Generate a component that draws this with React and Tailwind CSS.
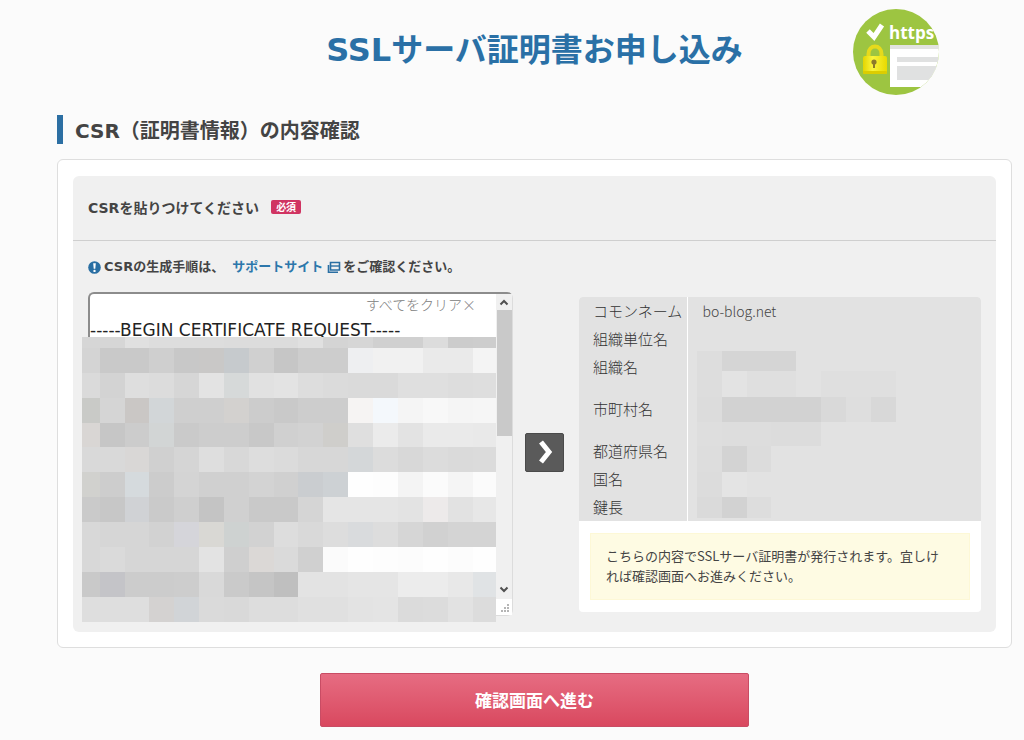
import React from "react";

const WIDE = "font-['DejaVu_Sans','Noto_Sans_CJK_JP',sans-serif]";

// Grey levels of the masked areas, one two-digit hex value per cell.
const REQUEST_MASK = [
  "d6 d6 e0 dd dd dd dc dc dc e0 d4 d6 d0 d0 dc cc cd",
  "d4 c9 c9 cf c8 c8 c9 d0 c6 cd cd f0 f1 f1 ea ea f4",
  "da d3 de dc d6 e3 d7 e1 e3 dd db da da df df dd de",
  "c9 d5 c8 d3 cf cf d1 cc c9 cd cd f5 f8 f5 f8 f5 f6",
  "d8 c6 cc d3 ca cd cd c8 d0 d2 cf df eb e3 ea ea e9",
  "d9 d9 d8 d0 d5 de d8 dd db d7 d7 d6 dc d8 dc da db",
  "d0 cd d9 cc d4 d0 d0 d3 d0 cb cd fe fd f4 fb f5 fb",
  "ca c7 d2 ca cf c4 d0 c9 c9 d5 e5 e5 e5 e3 eb e2 e7",
  "d8 d6 d6 d2 d5 d8 cf d2 dd d9 dd da dd d6 d1 d4 d4",
  "d8 da d6 d6 d6 e3 cf d9 da d0 fb fe fd fc fe fc fe",
  "c9 c4 cc cc cd d9 ca c5 bf e3 e3 e5 e5 ec ec e8 e2",
  "de de de d2 d2 da d9 dd dd e0 e0 e3 e4 db dc e2 dc",
];
const REQUEST_X = [0, 18, 43, 67, 92, 117, 142, 167, 192, 216, 241, 266, 291, 316, 341, 366, 391, 414];
const REQUEST_Y = [0, 11, 36, 61, 86, 110, 135, 160, 185, 210, 235, 260, 285];

// Cells whose text colour bled into the mask, keyed by "row-column".
const REQUEST_TINTS = {
  "1-5": "#c9c8c7",
  "1-6": "#c6cacd",
  "1-11": "#eeeff1",
  "2-6": "#d6d9d9",
  "3-0": "#c9cac7",
  "3-2": "#cac7c5",
  "3-3": "#d2d6d8",
  "3-6": "#d3d1cf",
  "3-11": "#f6f4f3",
  "3-12": "#f4f8fc",
  "4-0": "#d9d6d4",
  "4-3": "#d2d5d5",
  "4-10": "#cfcecb",
  "5-2": "#d9d7d6",
  "5-11": "#d4d7d9",
  "6-0": "#d1d1ce",
  "6-2": "#d5dadd",
  "6-9": "#cacdd0",
  "6-10": "#cdd1d4",
  "7-2": "#d0d2d5",
  "7-14": "#edeaea",
  "8-4": "#d5d5da",
  "8-5": "#d9d8d4",
  "8-6": "#ced2d1",
  "8-11": "#d9dbdd",
  "9-7": "#dbd8d6",
  "10-1": "#c4c4c8",
  "10-16": "#e0e3e5",
  "11-3": "#d4d2d1",
  "11-4": "#d1d4d7",
};

const DETAIL_MASK = [
  "dd d5 d5 d5",
  "dd e3 df df e2 df df df",
  "dc d2 d2 d2 d2 d9 de d8",
  "de dd dd dc dc",
  "dd d3 dc",
  "dc e4",
  "da d2 dd",
];
const DETAIL_X = [0, 25, 50, 74, 99, 124, 149, 174, 199];
const DETAIL_Y = [0, 20, 46, 71, 95, 121, 146, 167];

function Mask({ rows, xs, ys, tints = {}, className }) {
  const width = xs[xs.length - 1];
  const height = ys[ys.length - 1];
  return (
    <svg
      aria-hidden="true"
      width={width}
      height={height}
      viewBox={`0 0 ${width} ${height}`}
      shapeRendering="crispEdges"
      className={className}
    >
      {rows.map((row, r) =>
        row.split(" ").map((level, c) => (
          <rect
            key={`${r}-${c}`}
            x={xs[c]}
            y={ys[r]}
            width={xs[c + 1] - xs[c]}
            height={ys[r + 1] - ys[r]}
            fill={tints[`${r}-${c}`] || `#${level}${level}${level}`}
          />
        ))
      )}
    </svg>
  );
}

function HttpsLogo() {
  return (
    <svg width="88" height="88" viewBox="0 0 88 88" role="img" aria-label="https">
      <defs>
        <clipPath id="disc">
          <circle cx="44" cy="44" r="43" />
        </clipPath>
        <linearGradient id="lock" x1="0" y1="0" x2="1" y2="0">
          <stop offset="0" stopColor="#e3d500" />
          <stop offset="0.4" stopColor="#faf53c" />
          <stop offset="1" stopColor="#e8da00" />
        </linearGradient>
      </defs>
      <g clipPath="url(#disc)">
        <rect width="88" height="88" fill="#9dc541" />
        <path d="M38 37H88V79H38Z" fill="#fff" />
        <path d="M38 37H88V41H38Z" fill="#e2e3df" />
        <path d="M45 49H86V54H45ZM45 58H88V72H45Z" fill="#e0e1e1" />
        <path d="M16 23L22 29L30 17" fill="none" stroke="#fff" strokeWidth="5" />
        <path
          d="M16.5 50V46C16.5 36 29.5 36 29.5 46V50"
          fill="none"
          stroke="#e6da1c"
          strokeWidth="4"
        />
        <rect x="11" y="48" width="24" height="18" rx="2" fill="url(#lock)" />
        <rect x="11" y="63" width="24" height="3" rx="1" fill="#dccd00" />
        <circle cx="22" cy="54" r="2.6" fill="#8d7b2a" />
        <path d="M21 55H23V60H21Z" fill="#8d7b2a" />
        <text
          x="37"
          y="31"
          fill="#fff"
          fontFamily="'Open Sans', 'Noto Sans', sans-serif"
          fontWeight="700"
          fontSize="17"
        >
          https
        </text>
      </g>
    </svg>
  );
}

function AlertIcon() {
  return (
    <svg width="13" height="13" viewBox="0 0 13 13" aria-hidden="true">
      <circle cx="6.5" cy="6.5" r="6.3" fill="#2a6fa3" />
      <path d="M5.2 2.2H7.8L7.3 7.8H5.7Z" fill="#fff" />
      <circle cx="6.5" cy="9.9" r="1.2" fill="#fff" />
    </svg>
  );
}

function WindowIcon() {
  return (
    <svg width="14" height="13" viewBox="0 0 14 13" aria-hidden="true" fill="none" stroke="#2a6fa3">
      <path d="M3.5 1.5H12.5V9H3.5Z" strokeWidth="1.6" />
      <path d="M3.5 5H12.5" strokeWidth="1.4" />
      <path d="M1.5 4V11.2H11" strokeWidth="1.6" />
    </svg>
  );
}

function ScrollTrack() {
  return (
    <div aria-hidden="true" className="flex w-4 flex-col items-center bg-[#f0f0f0]">
      <svg width="16" height="16" viewBox="0 0 16 16" fill="none" stroke="#505050" strokeWidth="2">
        <path d="M4.5 10.5L8 7L11.5 10.5" />
      </svg>
      <div className="h-[126px] w-[15px] bg-[#c9c9c9]" />
      <div className="flex-1" />
      <svg width="16" height="17" viewBox="0 0 16 17" fill="none" stroke="#505050" strokeWidth="2">
        <path d="M4.5 5.5L8 9L11.5 5.5" />
      </svg>
      <svg width="16" height="16" viewBox="0 0 16 16" className="bg-white" fill="#b5b5b5">
        <path d="M11 5h2v2h-2zM8 8h2v2h-2zM11 8h2v2h-2zM5 11h2v2h-2zM8 11h2v2h-2zM11 11h2v2h-2z" />
      </svg>
    </div>
  );
}

const DETAILS = [
  { name: "コモンネーム", value: "bo-blog.net", height: "h-7" },
  { name: "組織単位名", value: "", height: "h-7" },
  { name: "組織名", value: "", height: "h-7" },
  { name: "市町村名", value: "", height: "h-14" },
  { name: "都道府県名", value: "", height: "h-7" },
  { name: "国名", value: "", height: "h-7" },
  { name: "鍵長", value: "", height: "h-7" },
];

export default function App() {
  return (
    <main className="min-h-screen bg-[#fbfbfb] pt-2 pr-3 pb-3 pl-[57px] font-['Noto_Sans_CJK_JP',sans-serif] text-[#444]">
      <header className="grid grid-cols-[1fr_auto_1fr] items-center">
        <h1
          className={`${WIDE} col-start-2 pb-1 text-[32px] leading-[40px] font-bold whitespace-nowrap text-[#2a70a6]`}
        >
          SSLサーバ証明書お申し込み
        </h1>
        <div className="mr-[72px] justify-self-end">
          <HttpsLogo />
        </div>
      </header>

      <h2
        className={`${WIDE} mt-[19px] border-l-6 border-[#2c6fa3] pt-[3px] pl-3 text-[20px] leading-[26px] font-bold`}
      >
        CSR（証明書情報）の内容確認
      </h2>

      <form
        className="mt-[15px]"
        onSubmit={(event) => event.preventDefault()}
      >
        <div className="rounded-md border border-[#dedede] bg-white px-[15px] pt-4 pb-[15px]">
          <div className="rounded-md bg-[#f0f0f0] pb-4">
            <div className="flex h-[65px] items-center gap-3 border-b border-[#cfcfcf] px-[15px]">
              <label htmlFor="csr" className={`${WIDE} text-[14px] leading-5 font-bold`}>
                CSRを貼りつけてください
              </label>
              <span className="mb-[3px] rounded-xs bg-[#d03462] px-[5px] text-[10px] leading-[14px] font-bold text-white">
                必須
              </span>
            </div>

            <p
              className={`${WIDE} flex items-center px-[15px] pt-4 text-[13px] leading-5 font-bold`}
            >
              <AlertIcon />
              <span className="ml-[3px]">CSRの生成手順は、</span>
              <a href="#support" className="mr-0.5 ml-2 flex items-center gap-1 text-[#2c77ab]">
                サポートサイト
                <WindowIcon />
              </a>
              <span>をご確認ください。</span>
            </p>

            <div className="mt-[15px] flex items-center px-[15px]">
              <div className="relative flex h-[324px] w-[425px] rounded-md border-t-2 border-r border-b border-l-2 border-t-[#8c8c8c] border-r-[#dcdcdc] border-b-[#dcdcdc] border-l-[#8c8c8c] bg-white">
                <div className="flex flex-1 flex-col">
                  <button
                    type="button"
                    className="mr-5 self-end text-[14px] leading-5 font-light text-[#808080]"
                  >
                    すべてをクリア×
                  </button>
                  <textarea
                    id="csr"
                    defaultValue="-----BEGIN CERTIFICATE REQUEST-----"
                    className={`${WIDE} block w-full flex-1 resize-none overflow-hidden pt-1 text-[17px] leading-6 text-[#222] outline-none`}
                  />
                </div>
                <ScrollTrack />
                <Mask
                  rows={REQUEST_MASK}
                  xs={REQUEST_X}
                  ys={REQUEST_Y}
                  tints={REQUEST_TINTS}
                  className="absolute top-[43px] -left-2"
                />
              </div>

              <button
                type="button"
                aria-label="内容を読み取る"
                className="mr-[15px] mb-1 ml-3 flex size-[39px] items-center justify-center rounded-xs border border-[#4a4a4a] bg-[#5a5a5a]"
              >
                <svg width="20" height="26" viewBox="0 0 20 26" fill="none" stroke="#fff" strokeWidth="5">
                  <path d="M6 3L14 13L6 23" />
                </svg>
              </button>

              <section className="flex-1 overflow-hidden rounded-sm bg-white">
                <div className="relative">
                  <table className="w-full bg-[#e2e2e2] text-left">
                    <tbody>
                      {DETAILS.map(({ name, value, height }) => (
                        <tr key={name} className={height}>
                          <th
                            scope="row"
                            className="w-[108px] border-r border-white py-0 pl-[14px] text-[15px] leading-5 font-light whitespace-nowrap text-[#333]"
                          >
                            {name}
                          </th>
                          <td className="py-0 pl-[15px] text-[14px] leading-5 font-light">{value}</td>
                        </tr>
                      ))}
                    </tbody>
                  </table>
                  <Mask
                    rows={DETAIL_MASK}
                    xs={DETAIL_X}
                    ys={DETAIL_Y}
                    className="absolute top-[54px] left-[118px]"
                  />
                </div>
                <p className="mx-[11px] my-3 border border-[#fdf8d6] bg-[#fefbe3] pt-3 pr-5 pb-[13px] pl-[15px] text-[13px] leading-5">
                  こちらの内容でSSLサーバ証明書が発行されます。宜しければ確認画面へお進みください。
                </p>
              </section>
            </div>
          </div>
        </div>

        <button
          type="submit"
          className="mx-auto mt-[25px] block h-[54px] w-[429px] rounded-xs border border-[#c94c64] bg-linear-to-b from-[#e66c82] to-[#d9485f] text-[17px] leading-6 font-bold text-white"
        >
          確認画面へ進む
        </button>
      </form>
    </main>
  );
}
